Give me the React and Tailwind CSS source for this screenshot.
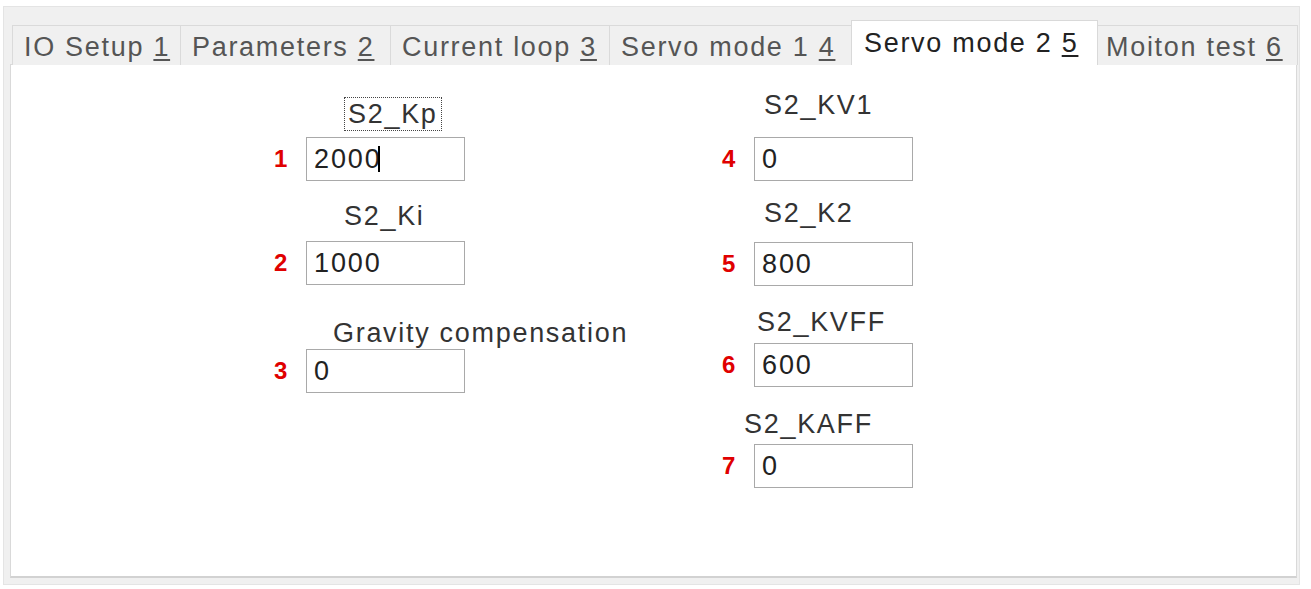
import React from "react";

const tabs = [
    { label: "IO Setup ", key: "1", w: "w-[169px]", pl: "pl-[11px]" },
    { label: "Parameters ", key: "2", w: "w-[211px]", pl: "pl-[11px]" },
    { label: "Current loop ", key: "3", w: "w-[220px]", pl: "pl-[11px]" },
    { label: "Servo mode 1 ", key: "4", w: "w-[243px]", pl: "pl-[11px]" },
    { label: "Servo mode 2 ", key: "5", w: "w-[247px]", pl: "pl-[12px]", active: true },
    { label: "Moiton test ", key: "6", w: "w-[201px]", pl: "pl-[8px]" },
];

const Field = ({ num, value, caret }) => (
    <div className="flex items-center h-[44px]">
        <span className="w-[32px] text-[24px] font-bold text-[#e00000] leading-none">{num}</span>
        <div className="w-[159px] h-[44px] border border-[#a9a9a9] bg-white flex items-center pl-[7px] text-[27px] tracking-[1.9px] text-[#222]">
            {value}
            {caret && <span className="inline-block w-[2px] h-[26px] bg-black -ml-[4px]"></span>}
        </div>
    </div>
);

const Label = ({ children, className }) => (
    <div className={`h-[28px] leading-[28px] text-[27px] tracking-[1.7px] text-[#333] whitespace-nowrap ${className}`}>
        {children}
    </div>
);

const App = () => {
    return (
        <div className="w-[1311px] h-[589px] bg-white pt-[6px] pl-[3px]" style={{ fontFamily: '"Liberation Sans", Arial, sans-serif' }}>
            <div className="w-[1297px] h-[579px] bg-[#f0f0f0] border border-[#e4e4e4] pt-[13px] pl-[6px]">
                {/* tab strip */}
                <div className="flex items-end h-[45px] pl-[2px] relative z-10">
                    {tabs.map((t) =>
                        t.active ? (
                            <div
                                key={t.key}
                                className={`${t.w} ${t.pl} h-[45px] bg-white border border-b-0 border-[#d9d9d9] pt-[8px] text-[27px] leading-[28px] tracking-[1.7px] text-[#222] whitespace-nowrap -mr-[1px] relative z-10`}
                            >
                                {t.label}<span className="underline underline-offset-[3px]">{t.key}</span>
                            </div>
                        ) : (
                            <div
                                key={t.key}
                                className={`${t.w} ${t.pl} h-[40px] bg-[#f0f0f0] border border-b-0 border-[#dadada] pt-[7px] text-[27px] leading-[28px] tracking-[1.7px] text-[#555] whitespace-nowrap -mr-[1px] overflow-hidden`}
                            >
                                {t.label}<span className="underline underline-offset-[3px]">{t.key}</span>
                            </div>
                        )
                    )}
                </div>
                {/* panel */}
                <div className="w-[1287px] h-[514px] -mt-[1px] bg-white border border-[#d9d9d9] border-b-[2px] border-b-[#d2d2d2] flex">
                    <div className="ml-[263px] w-[448px] flex flex-col">
                        <div className="mt-[32px] ml-[70px] self-start border border-dotted border-[#444] px-[3px] py-[2px]">
                            <Label>S2_Kp</Label>
                        </div>
                        <div className="mt-[6px]"><Field num="1" value="2000" caret /></div>
                        <Label className="mt-[21px] ml-[70px]">S2_Ki</Label>
                        <div className="mt-[11px]"><Field num="2" value="1000" /></div>
                        <Label className="mt-[34px] ml-[59px]">Gravity compensation</Label>
                        <div className="mt-[2px]"><Field num="3" value="0" /></div>
                    </div>
                    <div className="w-[300px] flex flex-col">
                        <Label className="mt-[26px] ml-[42px]">S2_KV1</Label>
                        <div className="mt-[18px]"><Field num="4" value="0" /></div>
                        <Label className="mt-[18px] ml-[42px]">S2_K2</Label>
                        <div className="mt-[15px]"><Field num="5" value="800" /></div>
                        <Label className="mt-[22px] ml-[35px]">S2_KVFF</Label>
                        <div className="mt-[7px]"><Field num="6" value="600" /></div>
                        <Label className="mt-[23px] ml-[22px]">S2_KAFF</Label>
                        <div className="mt-[6px]"><Field num="7" value="0" /></div>
                    </div>
                </div>
            </div>
        </div>
    );
};

export default App;
